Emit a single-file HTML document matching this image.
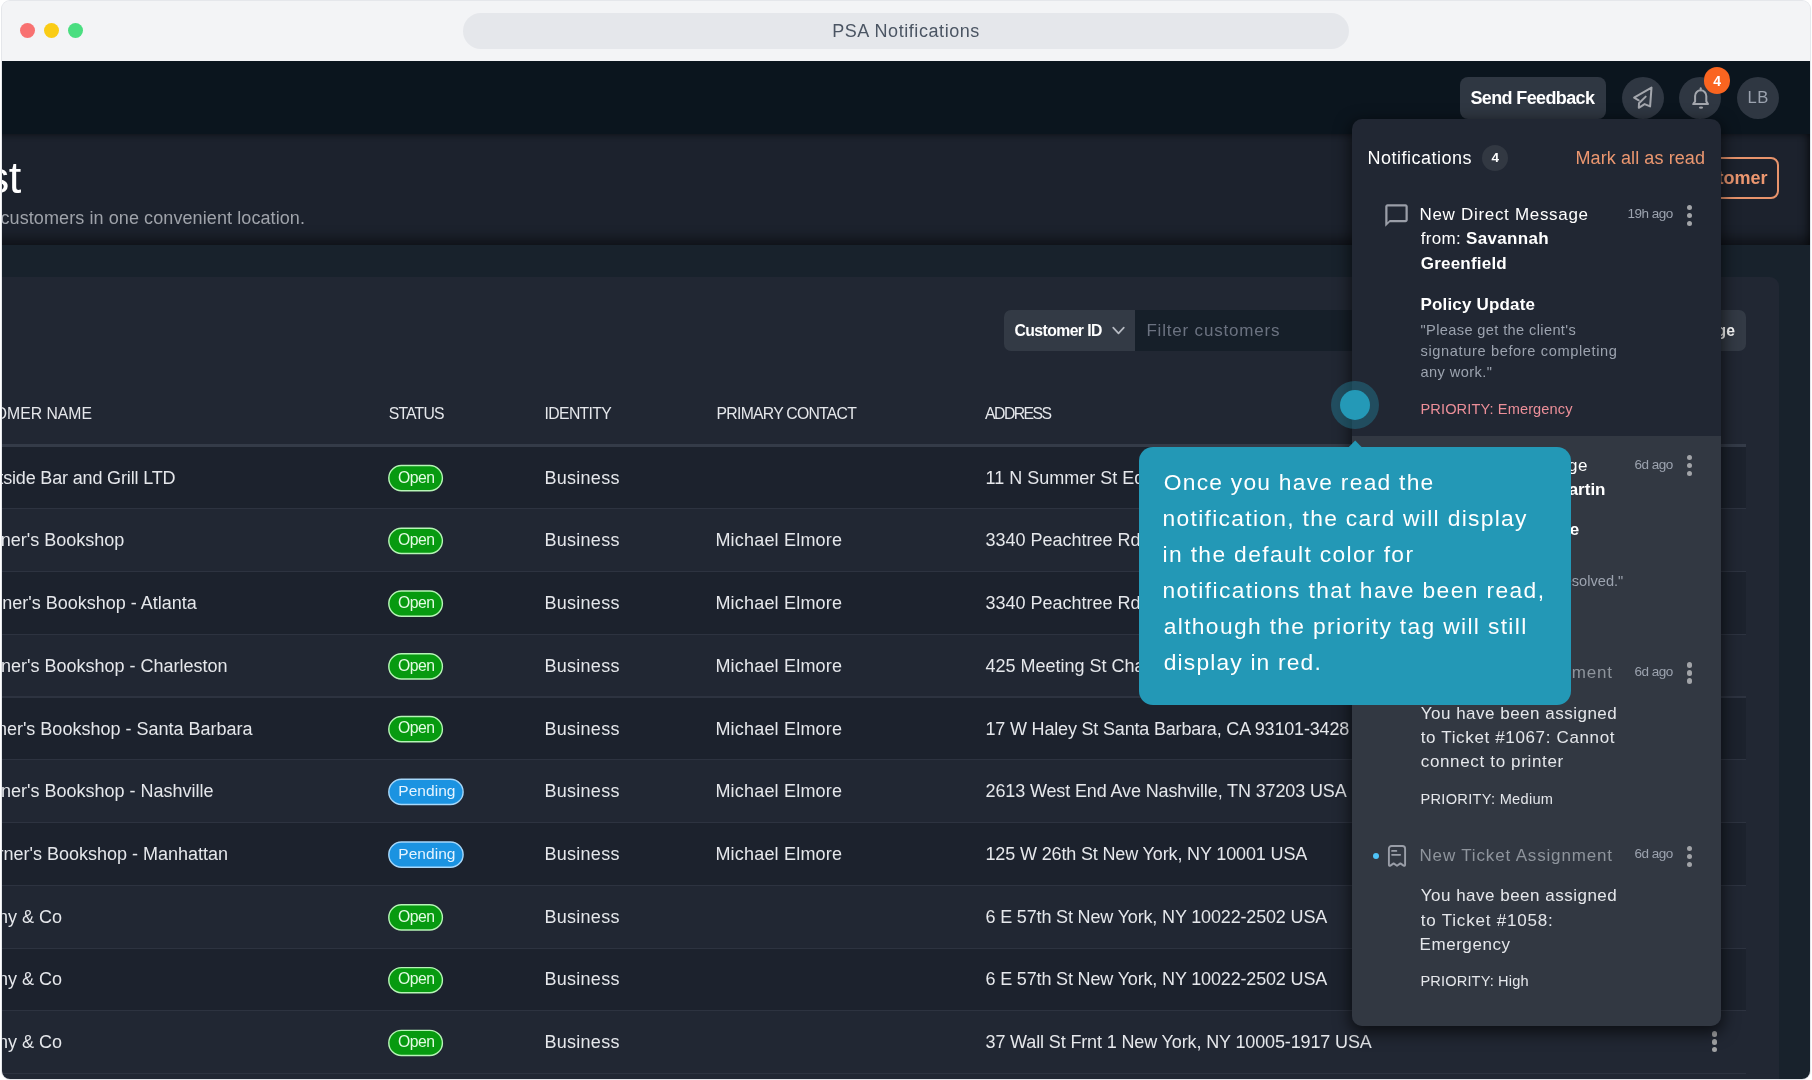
<!DOCTYPE html>
<html lang="en"><head><meta charset="utf-8"><title>PSA Notifications</title>
<style>
html,body{margin:0;padding:0;background:#ffffff}
body{width:1812px;height:1080px;overflow:hidden;position:relative;font-family:"Liberation Sans", sans-serif}
#frame{position:absolute;left:1px;top:0;width:1810px;height:1079.5px;border-radius:9px;background:#e5e7eb}
#win{position:absolute;left:2px;top:1px;width:1808px;height:1077.6px;border-radius:8px;overflow:hidden;background:#f3f4f6}
#c{position:absolute;left:-2px;top:-1px;width:1812px;height:1080px}
#c{will-change:transform}
.b{position:absolute;display:block}
.t{position:absolute;white-space:nowrap;line-height:1;display:block}
b{font-weight:700}
</style></head><body>
<div id="frame"></div>
<div id="win"><div id="c">
<div class="b" style="left:0.00px;top:0.00px;width:1812.00px;height:61.00px;background:#f3f4f6;"></div>
<div class="b" style="left:20.00px;top:23.00px;width:15.00px;height:15.00px;background:#f87171;border-radius:50%;"></div>
<div class="b" style="left:44.00px;top:23.00px;width:15.00px;height:15.00px;background:#facc15;border-radius:50%;"></div>
<div class="b" style="left:68.00px;top:23.00px;width:15.00px;height:15.00px;background:#4ade80;border-radius:50%;"></div>
<div class="b" style="left:463.00px;top:13.00px;width:886.00px;height:36.00px;background:#e5e7eb;border-radius:18px;"></div>
<span class="t" id="t1" style="top:22.00px;font-size:18px;color:#4b5563;left:832.20px;letter-spacing:0.570px;">PSA Notifications</span>
<div class="b" style="left:0.00px;top:61.00px;width:1812.00px;height:73.00px;background:#0b151e;"></div>
<div class="b" style="left:1459.50px;top:77.00px;width:146.50px;height:41.50px;background:#2f3742;border-radius:8px;"></div>
<span class="t" id="t2" style="top:88.50px;font-size:18px;color:#ffffff;font-weight:700;left:1470.40px;letter-spacing:-0.621px;">Send Feedback</span>
<div class="b" style="left:1621.70px;top:76.70px;width:42.00px;height:42.00px;background:#2f3742;border-radius:50%;"></div>
<div class="b" style="left:1678.90px;top:76.70px;width:42.00px;height:42.00px;background:#2f3742;border-radius:50%;"></div>
<div class="b" style="left:1736.80px;top:76.70px;width:42.00px;height:42.00px;background:#2f3742;border-radius:50%;"></div>
<span class="t" id="t3" style="top:90.20px;font-size:16.6px;color:#9ca3af;left:1747.60px;letter-spacing:0.303px;">LB</span>
<svg class="b" style="left:1631.8px;top:85.8px" width="22" height="24" viewBox="0 0 22 24" fill="none" stroke="#a4a7ad" stroke-width="2" stroke-linejoin="round" stroke-linecap="round"><path d="M6.7 14.3 L2.1 11.7 L19.5 1.6 L18.1 20.4 L12.6 18.1 L6.8 21.8 L7 17.3 L13.7 10.6"/></svg>
<svg class="b" style="left:1689.9px;top:85.8px" width="22" height="24" viewBox="0 0 22 24" fill="none" stroke="#a4a7ad" stroke-width="2" stroke-linejoin="round" stroke-linecap="round"><path d="M3.2 18.1 H18 L16.3 15.4 V9.9 A5.6 5.6 0 0 0 5.1 9.9 V15.4 Z"/><path d="M10.7 4.3 V2.2"/><ellipse cx="11" cy="21.6" rx="2.1" ry="1.2" fill="#a4a7ad" stroke="none"/></svg>
<div class="b" style="left:1703.90px;top:67.40px;width:26.60px;height:26.60px;background:#fa6520;border-radius:50%;"></div>
<span class="t" id="t4" style="top:73.60px;font-size:14px;color:#ffffff;font-weight:700;left:1713.30px;">4</span>
<div class="b" style="left:-40.00px;top:134.00px;width:1851.00px;height:111.00px;background:#1c222d;box-shadow:inset 0 -16px 12px -9px rgba(0,0,0,.42),inset 0 5px 6px -4px rgba(0,0,0,.4),inset -9px 0 9px -5px rgba(0,0,0,.5);"></div>
<span class="t" id="t5" style="top:155.00px;font-size:45px;color:#ffffff;right:1790.80px;letter-spacing:-0.600px;margin-right:0.600px;">Customer List</span>
<span class="t" id="t6" style="top:209.30px;font-size:18px;color:#9fa3aa;right:1507.00px;letter-spacing:0.092px;margin-right:-0.092px;">Manage all of your customers in one convenient location.</span>
<div class="b" style="left:1640px;top:157px;width:139px;height:42px;box-sizing:border-box;border:2px solid #e8946c;border-radius:8px"></div>
<span class="t" id="t7" style="top:168.75px;font-size:18px;color:#ec9770;font-weight:700;right:44.50px;">Add Customer</span>
<div class="b" style="left:0.00px;top:245.00px;width:1812.00px;height:840.00px;background:#18222c;"></div>
<div class="b" style="left:-50.00px;top:276.50px;width:1829.00px;height:900.00px;background:#212733;border-radius:9px;"></div>
<div class="b" style="left:1004.30px;top:309.50px;width:130.40px;height:41.30px;background:#333a45;border-radius:7px 0 0 7px;"></div>
<div class="b" style="left:1134.70px;top:309.50px;width:560.00px;height:41.30px;background:#161f29;border-radius:0 7px 7px 0;"></div>
<span class="t" id="t8" style="top:322.62px;font-size:15.75px;color:#ffffff;font-weight:700;left:1014.40px;letter-spacing:-0.564px;">Customer ID</span>
<svg class="b" style="left:1111.3px;top:325.3px" width="15" height="12" viewBox="0 0 15 12" fill="none" stroke="#b6bac2" stroke-width="1.7" stroke-linecap="round" stroke-linejoin="round"><path d="M2.2 2.6 L7.5 8.4 L12.8 2.6"/></svg>
<span class="t" id="t9" style="top:322.00px;font-size:17px;color:#6b7280;left:1146.40px;letter-spacing:0.819px;">Filter customers</span>
<div class="b" style="left:1660.00px;top:310.00px;width:85.50px;height:41.00px;background:#333a45;border-radius:7px;"></div>
<span class="t" id="t10" style="top:322.62px;font-size:15.75px;color:#ffffff;font-weight:700;right:77.00px;">Manage</span>
<span class="t" id="t11" style="top:405.93px;font-size:15.75px;color:#e5e7eb;right:1720.00px;">CUSTOMER NAME</span>
<span class="t" id="t12" style="top:405.93px;font-size:15.75px;color:#e5e7eb;left:388.75px;letter-spacing:-0.809px;">STATUS</span>
<span class="t" id="t13" style="top:405.93px;font-size:15.75px;color:#e5e7eb;left:544.60px;letter-spacing:-0.652px;">IDENTITY</span>
<span class="t" id="t14" style="top:405.93px;font-size:15.75px;color:#e5e7eb;left:716.60px;letter-spacing:-0.731px;">PRIMARY CONTACT</span>
<span class="t" id="t15" style="top:405.93px;font-size:15.75px;color:#e5e7eb;left:985.10px;letter-spacing:-1.526px;">ADDRESS</span>
<div class="b" style="left:-50.00px;top:444.20px;width:1795.50px;height:2.80px;background:#343b48;"></div>
<div class="b" style="left:-50.00px;top:446.60px;width:1795.50px;height:62.76px;background:#1c222d;"></div>
<div class="b" style="left:-50.00px;top:508.21px;width:1795.50px;height:1.15px;background:#2d3340;"></div>
<span class="t" id="t16" style="top:468.75px;font-size:18px;color:#e5e7eb;right:1636.50px;letter-spacing:-0.160px;margin-right:0.160px;">Westside Bar and Grill LTD</span>
<svg class="b" style="left:386px;top:462px" width="61" height="32"><rect x="2.8" y="3.50" width="53.6" height="25.2" rx="12.6" fill="#079a10" stroke="#b6f5b6" stroke-width="1.4"/></svg>
<span class="t" id="t17" style="top:469.68px;font-size:15.75px;color:#e3fbe3;left:397.90px;letter-spacing:-0.510px;">Open</span>
<span class="t" id="t18" style="top:468.75px;font-size:18px;color:#e5e7eb;left:544.60px;letter-spacing:0.250px;">Business</span>
<span class="t" id="t19" style="top:468.75px;font-size:18px;color:#e5e7eb;left:985.50px;">11 N Summer St Edgartown, MA 02539 USA</span>
<div class="b" style="left:1711.55px;top:466.60px;width:5.40px;height:5.40px;background:#a2a3a5;border-radius:50%;"></div>
<div class="b" style="left:1711.55px;top:474.40px;width:5.40px;height:5.40px;background:#a2a3a5;border-radius:50%;"></div>
<div class="b" style="left:1711.55px;top:482.20px;width:5.40px;height:5.40px;background:#a2a3a5;border-radius:50%;"></div>
<div class="b" style="left:-50.00px;top:509.36px;width:1795.50px;height:62.76px;background:#212733;"></div>
<div class="b" style="left:-50.00px;top:570.97px;width:1795.50px;height:1.15px;background:#2d3340;"></div>
<span class="t" id="t20" style="top:531.45px;font-size:18px;color:#e5e7eb;right:1687.75px;">Turner's Bookshop</span>
<svg class="b" style="left:386px;top:524px" width="61" height="32"><rect x="2.8" y="4.26" width="53.6" height="25.2" rx="12.6" fill="#079a10" stroke="#b6f5b6" stroke-width="1.4"/></svg>
<span class="t" id="t21" style="top:532.38px;font-size:15.75px;color:#e3fbe3;left:397.90px;letter-spacing:-0.510px;">Open</span>
<span class="t" id="t22" style="top:531.45px;font-size:18px;color:#e5e7eb;left:544.60px;letter-spacing:0.250px;">Business</span>
<span class="t" id="t23" style="top:531.45px;font-size:18px;color:#e5e7eb;left:715.40px;letter-spacing:0.196px;">Michael Elmore</span>
<span class="t" id="t24" style="top:531.45px;font-size:18px;color:#e5e7eb;left:985.50px;">3340 Peachtree Rd NE Atlanta, GA 30326 USA</span>
<div class="b" style="left:1711.55px;top:529.36px;width:5.40px;height:5.40px;background:#a2a3a5;border-radius:50%;"></div>
<div class="b" style="left:1711.55px;top:537.16px;width:5.40px;height:5.40px;background:#a2a3a5;border-radius:50%;"></div>
<div class="b" style="left:1711.55px;top:544.96px;width:5.40px;height:5.40px;background:#a2a3a5;border-radius:50%;"></div>
<div class="b" style="left:-50.00px;top:572.12px;width:1795.50px;height:62.76px;background:#1c222d;"></div>
<div class="b" style="left:-50.00px;top:633.73px;width:1795.50px;height:1.15px;background:#2d3340;"></div>
<span class="t" id="t25" style="top:594.15px;font-size:18px;color:#e5e7eb;right:1615.25px;">Turner's Bookshop - Atlanta</span>
<svg class="b" style="left:386px;top:587px" width="61" height="32"><rect x="2.8" y="4.02" width="53.6" height="25.2" rx="12.6" fill="#079a10" stroke="#b6f5b6" stroke-width="1.4"/></svg>
<span class="t" id="t26" style="top:595.07px;font-size:15.75px;color:#e3fbe3;left:397.90px;letter-spacing:-0.510px;">Open</span>
<span class="t" id="t27" style="top:594.15px;font-size:18px;color:#e5e7eb;left:544.60px;letter-spacing:0.250px;">Business</span>
<span class="t" id="t28" style="top:594.15px;font-size:18px;color:#e5e7eb;left:715.40px;letter-spacing:0.196px;">Michael Elmore</span>
<span class="t" id="t29" style="top:594.15px;font-size:18px;color:#e5e7eb;left:985.50px;">3340 Peachtree Rd NE Atlanta, GA 30326 USA</span>
<div class="b" style="left:1711.55px;top:592.12px;width:5.40px;height:5.40px;background:#a2a3a5;border-radius:50%;"></div>
<div class="b" style="left:1711.55px;top:599.92px;width:5.40px;height:5.40px;background:#a2a3a5;border-radius:50%;"></div>
<div class="b" style="left:1711.55px;top:607.72px;width:5.40px;height:5.40px;background:#a2a3a5;border-radius:50%;"></div>
<div class="b" style="left:-50.00px;top:634.88px;width:1795.50px;height:62.76px;background:#212733;"></div>
<div class="b" style="left:-50.00px;top:696.49px;width:1795.50px;height:1.15px;background:#2d3340;"></div>
<span class="t" id="t30" style="top:656.85px;font-size:18px;color:#e5e7eb;right:1584.50px;">Turner's Bookshop - Charleston</span>
<svg class="b" style="left:386px;top:650px" width="61" height="32"><rect x="2.8" y="3.78" width="53.6" height="25.2" rx="12.6" fill="#079a10" stroke="#b6f5b6" stroke-width="1.4"/></svg>
<span class="t" id="t31" style="top:657.77px;font-size:15.75px;color:#e3fbe3;left:397.90px;letter-spacing:-0.510px;">Open</span>
<span class="t" id="t32" style="top:656.85px;font-size:18px;color:#e5e7eb;left:544.60px;letter-spacing:0.250px;">Business</span>
<span class="t" id="t33" style="top:656.85px;font-size:18px;color:#e5e7eb;left:715.40px;letter-spacing:0.196px;">Michael Elmore</span>
<span class="t" id="t34" style="top:656.85px;font-size:18px;color:#e5e7eb;left:985.50px;">425 Meeting St Charleston, SC 29403 USA</span>
<div class="b" style="left:1711.55px;top:654.88px;width:5.40px;height:5.40px;background:#a2a3a5;border-radius:50%;"></div>
<div class="b" style="left:1711.55px;top:662.68px;width:5.40px;height:5.40px;background:#a2a3a5;border-radius:50%;"></div>
<div class="b" style="left:1711.55px;top:670.48px;width:5.40px;height:5.40px;background:#a2a3a5;border-radius:50%;"></div>
<div class="b" style="left:-50.00px;top:697.64px;width:1795.50px;height:62.76px;background:#1c222d;"></div>
<div class="b" style="left:-50.00px;top:759.25px;width:1795.50px;height:1.15px;background:#2d3340;"></div>
<span class="t" id="t35" style="top:719.55px;font-size:18px;color:#e5e7eb;right:1559.50px;">Turner's Bookshop - Santa Barbara</span>
<svg class="b" style="left:386px;top:713px" width="61" height="32"><rect x="2.8" y="3.54" width="53.6" height="25.2" rx="12.6" fill="#079a10" stroke="#b6f5b6" stroke-width="1.4"/></svg>
<span class="t" id="t36" style="top:720.47px;font-size:15.75px;color:#e3fbe3;left:397.90px;letter-spacing:-0.510px;">Open</span>
<span class="t" id="t37" style="top:719.55px;font-size:18px;color:#e5e7eb;left:544.60px;letter-spacing:0.250px;">Business</span>
<span class="t" id="t38" style="top:719.55px;font-size:18px;color:#e5e7eb;left:715.40px;letter-spacing:0.196px;">Michael Elmore</span>
<span class="t" id="t39" style="top:719.55px;font-size:18px;color:#e5e7eb;left:985.50px;letter-spacing:-0.183px;">17 W Haley St Santa Barbara, CA 93101-3428 USA</span>
<div class="b" style="left:1711.55px;top:717.64px;width:5.40px;height:5.40px;background:#a2a3a5;border-radius:50%;"></div>
<div class="b" style="left:1711.55px;top:725.44px;width:5.40px;height:5.40px;background:#a2a3a5;border-radius:50%;"></div>
<div class="b" style="left:1711.55px;top:733.24px;width:5.40px;height:5.40px;background:#a2a3a5;border-radius:50%;"></div>
<div class="b" style="left:-50.00px;top:760.40px;width:1795.50px;height:62.76px;background:#212733;"></div>
<div class="b" style="left:-50.00px;top:822.01px;width:1795.50px;height:1.15px;background:#2d3340;"></div>
<span class="t" id="t40" style="top:782.25px;font-size:18px;color:#e5e7eb;right:1598.50px;">Turner's Bookshop - Nashville</span>
<svg class="b" style="left:386px;top:775px" width="81" height="32"><rect x="2.8" y="4.30" width="74.3" height="25.2" rx="12.6" fill="#1b93e1" stroke="#a6d8fb" stroke-width="1.4"/></svg>
<span class="t" id="t41" style="top:783.30px;font-size:15.5px;color:#e6f4ff;left:398.30px;letter-spacing:0.052px;">Pending</span>
<span class="t" id="t42" style="top:782.25px;font-size:18px;color:#e5e7eb;left:544.60px;letter-spacing:0.250px;">Business</span>
<span class="t" id="t43" style="top:782.25px;font-size:18px;color:#e5e7eb;left:715.40px;letter-spacing:0.196px;">Michael Elmore</span>
<span class="t" id="t44" style="top:782.25px;font-size:18px;color:#e5e7eb;left:985.50px;letter-spacing:-0.124px;">2613 West End Ave Nashville, TN 37203 USA</span>
<div class="b" style="left:1711.55px;top:780.40px;width:5.40px;height:5.40px;background:#a2a3a5;border-radius:50%;"></div>
<div class="b" style="left:1711.55px;top:788.20px;width:5.40px;height:5.40px;background:#a2a3a5;border-radius:50%;"></div>
<div class="b" style="left:1711.55px;top:796.00px;width:5.40px;height:5.40px;background:#a2a3a5;border-radius:50%;"></div>
<div class="b" style="left:-50.00px;top:823.16px;width:1795.50px;height:62.76px;background:#1c222d;"></div>
<div class="b" style="left:-50.00px;top:884.77px;width:1795.50px;height:1.15px;background:#2d3340;"></div>
<span class="t" id="t45" style="top:844.95px;font-size:18px;color:#e5e7eb;right:1584.00px;">Turner's Bookshop - Manhattan</span>
<svg class="b" style="left:386px;top:838px" width="81" height="32"><rect x="2.8" y="4.06" width="74.3" height="25.2" rx="12.6" fill="#1b93e1" stroke="#a6d8fb" stroke-width="1.4"/></svg>
<span class="t" id="t46" style="top:846.00px;font-size:15.5px;color:#e6f4ff;left:398.30px;letter-spacing:0.052px;">Pending</span>
<span class="t" id="t47" style="top:844.95px;font-size:18px;color:#e5e7eb;left:544.60px;letter-spacing:0.250px;">Business</span>
<span class="t" id="t48" style="top:844.95px;font-size:18px;color:#e5e7eb;left:715.40px;letter-spacing:0.196px;">Michael Elmore</span>
<span class="t" id="t49" style="top:844.95px;font-size:18px;color:#e5e7eb;left:985.50px;letter-spacing:-0.146px;">125 W 26th St New York, NY 10001 USA</span>
<div class="b" style="left:1711.55px;top:843.16px;width:5.40px;height:5.40px;background:#a2a3a5;border-radius:50%;"></div>
<div class="b" style="left:1711.55px;top:850.96px;width:5.40px;height:5.40px;background:#a2a3a5;border-radius:50%;"></div>
<div class="b" style="left:1711.55px;top:858.76px;width:5.40px;height:5.40px;background:#a2a3a5;border-radius:50%;"></div>
<div class="b" style="left:-50.00px;top:885.92px;width:1795.50px;height:62.76px;background:#212733;"></div>
<div class="b" style="left:-50.00px;top:947.53px;width:1795.50px;height:1.15px;background:#2d3340;"></div>
<span class="t" id="t50" style="top:907.65px;font-size:18px;color:#e5e7eb;right:1750.00px;">Tiffany &amp; Co</span>
<svg class="b" style="left:386px;top:901px" width="61" height="32"><rect x="2.8" y="3.82" width="53.6" height="25.2" rx="12.6" fill="#079a10" stroke="#b6f5b6" stroke-width="1.4"/></svg>
<span class="t" id="t51" style="top:908.58px;font-size:15.75px;color:#e3fbe3;left:397.90px;letter-spacing:-0.510px;">Open</span>
<span class="t" id="t52" style="top:907.65px;font-size:18px;color:#e5e7eb;left:544.60px;letter-spacing:0.250px;">Business</span>
<span class="t" id="t53" style="top:907.65px;font-size:18px;color:#e5e7eb;left:985.50px;letter-spacing:-0.162px;">6 E 57th St New York, NY 10022-2502 USA</span>
<div class="b" style="left:1711.55px;top:905.92px;width:5.40px;height:5.40px;background:#a2a3a5;border-radius:50%;"></div>
<div class="b" style="left:1711.55px;top:913.72px;width:5.40px;height:5.40px;background:#a2a3a5;border-radius:50%;"></div>
<div class="b" style="left:1711.55px;top:921.52px;width:5.40px;height:5.40px;background:#a2a3a5;border-radius:50%;"></div>
<div class="b" style="left:-50.00px;top:948.68px;width:1795.50px;height:62.76px;background:#1c222d;"></div>
<div class="b" style="left:-50.00px;top:1010.29px;width:1795.50px;height:1.15px;background:#2d3340;"></div>
<span class="t" id="t54" style="top:970.35px;font-size:18px;color:#e5e7eb;right:1750.00px;">Tiffany &amp; Co</span>
<svg class="b" style="left:386px;top:964px" width="61" height="32"><rect x="2.8" y="3.58" width="53.6" height="25.2" rx="12.6" fill="#079a10" stroke="#b6f5b6" stroke-width="1.4"/></svg>
<span class="t" id="t55" style="top:971.27px;font-size:15.75px;color:#e3fbe3;left:397.90px;letter-spacing:-0.510px;">Open</span>
<span class="t" id="t56" style="top:970.35px;font-size:18px;color:#e5e7eb;left:544.60px;letter-spacing:0.250px;">Business</span>
<span class="t" id="t57" style="top:970.35px;font-size:18px;color:#e5e7eb;left:985.50px;letter-spacing:-0.162px;">6 E 57th St New York, NY 10022-2502 USA</span>
<div class="b" style="left:1711.55px;top:968.68px;width:5.40px;height:5.40px;background:#a2a3a5;border-radius:50%;"></div>
<div class="b" style="left:1711.55px;top:976.48px;width:5.40px;height:5.40px;background:#a2a3a5;border-radius:50%;"></div>
<div class="b" style="left:1711.55px;top:984.28px;width:5.40px;height:5.40px;background:#a2a3a5;border-radius:50%;"></div>
<div class="b" style="left:-50.00px;top:1011.44px;width:1795.50px;height:62.76px;background:#212733;"></div>
<div class="b" style="left:-50.00px;top:1073.05px;width:1795.50px;height:1.15px;background:#2d3340;"></div>
<span class="t" id="t58" style="top:1033.05px;font-size:18px;color:#e5e7eb;right:1750.00px;">Tiffany &amp; Co</span>
<svg class="b" style="left:386px;top:1026px" width="61" height="32"><rect x="2.8" y="4.34" width="53.6" height="25.2" rx="12.6" fill="#079a10" stroke="#b6f5b6" stroke-width="1.4"/></svg>
<span class="t" id="t59" style="top:1033.98px;font-size:15.75px;color:#e3fbe3;left:397.90px;letter-spacing:-0.510px;">Open</span>
<span class="t" id="t60" style="top:1033.05px;font-size:18px;color:#e5e7eb;left:544.60px;letter-spacing:0.250px;">Business</span>
<span class="t" id="t61" style="top:1033.05px;font-size:18px;color:#e5e7eb;left:985.50px;letter-spacing:-0.135px;">37 Wall St Frnt 1 New York, NY 10005-1917 USA</span>
<div class="b" style="left:1711.55px;top:1031.44px;width:5.40px;height:5.40px;background:#a2a3a5;border-radius:50%;"></div>
<div class="b" style="left:1711.55px;top:1039.24px;width:5.40px;height:5.40px;background:#a2a3a5;border-radius:50%;"></div>
<div class="b" style="left:1711.55px;top:1047.04px;width:5.40px;height:5.40px;background:#a2a3a5;border-radius:50%;"></div>
<div class="b" style="left:1352px;top:119px;width:369px;height:907.3px;background:#212733;border-radius:10px;box-shadow:0 5px 16px 2px rgba(0,0,0,.62);overflow:hidden"><div class="b" style="left:0;top:316.5px;width:369px;height:600px;background:#323842"></div></div>
<span class="t" id="t62" style="top:148.75px;font-size:18px;color:#ffffff;left:1367.50px;letter-spacing:0.496px;">Notifications</span>
<div class="b" style="left:1482.40px;top:144.80px;width:26.00px;height:26.00px;background:#323842;border-radius:50%;"></div>
<span class="t" id="t63" style="top:150.95px;font-size:13.5px;color:#ffffff;font-weight:700;left:1491.60px;">4</span>
<span class="t" id="t64" style="top:148.75px;font-size:18px;color:#ec9770;left:1575.50px;letter-spacing:0.096px;">Mark all as read</span>
<svg class="b" style="left:1383.45px;top:201.85px" width="27" height="27" viewBox="0 0 24 24" fill="#9a9ea8"><path d="M20 2H4c-1.1 0-2 .9-2 2v18l4-4h14c1.1 0 2-.9 2-2V4c0-1.1-.9-2-2-2zm0 14H6l-2 2V4h16v12z"/></svg>
<span class="t" id="t65" style="top:206.00px;font-size:17px;color:#ffffff;left:1419.50px;letter-spacing:0.687px;">New Direct Message</span>
<span class="t" id="t66" style="top:230.40px;font-size:17px;color:#ffffff;left:1420.75px;letter-spacing:0.312px;">from: <b>Savannah</b></span>
<span class="t" id="t67" style="top:254.60px;font-size:17px;color:#ffffff;font-weight:700;left:1420.75px;letter-spacing:0.212px;">Greenfield</span>
<span class="t" id="t68" style="top:206.75px;font-size:13.5px;color:#9ca3af;left:1627.50px;letter-spacing:-0.510px;">19h ago</span>
<div class="b" style="left:1686.80px;top:204.80px;width:5.40px;height:5.40px;background:#a2a4a8;border-radius:50%;"></div>
<div class="b" style="left:1686.80px;top:212.70px;width:5.40px;height:5.40px;background:#a2a4a8;border-radius:50%;"></div>
<div class="b" style="left:1686.80px;top:220.60px;width:5.40px;height:5.40px;background:#a2a4a8;border-radius:50%;"></div>
<span class="t" id="t69" style="top:295.50px;font-size:17px;color:#ffffff;font-weight:700;left:1420.50px;letter-spacing:0.173px;">Policy Update</span>
<span class="t" id="t70" style="top:323.20px;font-size:14.6px;color:#9ca3af;left:1420.50px;letter-spacing:0.372px;">"Please get the client's</span>
<span class="t" id="t71" style="top:344.10px;font-size:14.6px;color:#9ca3af;left:1420.50px;letter-spacing:0.630px;">signature before completing</span>
<span class="t" id="t72" style="top:364.90px;font-size:14.6px;color:#9ca3af;left:1420.50px;letter-spacing:0.429px;">any work."</span>
<span class="t" id="t73" style="top:401.95px;font-size:14.6px;color:#ec8f99;left:1420.50px;letter-spacing:0.109px;">PRIORITY: Emergency</span>
<svg class="b" style="left:1383.45px;top:452.35px" width="27" height="27" viewBox="0 0 24 24" fill="#9a9ea8"><path d="M20 2H4c-1.1 0-2 .9-2 2v18l4-4h14c1.1 0 2-.9 2-2V4c0-1.1-.9-2-2-2zm0 14H6l-2 2V4h16v12z"/></svg>
<span class="t" id="t74" style="top:456.50px;font-size:17px;color:#ffffff;left:1420.75px;letter-spacing:0.584px;">New Direct Message</span>
<span class="t" id="t75" style="top:481.00px;font-size:17px;color:#ffffff;right:206.50px;">from: <b>Daniel Martin</b></span>
<span class="t" id="t76" style="top:520.50px;font-size:17px;color:#ffffff;font-weight:700;right:232.75px;">Ticket Update</span>
<span class="t" id="t77" style="top:573.95px;font-size:14.6px;color:#9ca3af;right:188.75px;">"The issue has been resolved."</span>
<span class="t" id="t78" style="top:457.50px;font-size:13.5px;color:#9ca3af;left:1634.50px;letter-spacing:-0.509px;">6d ago</span>
<div class="b" style="left:1686.80px;top:454.90px;width:5.40px;height:5.40px;background:#a2a4a8;border-radius:50%;"></div>
<div class="b" style="left:1686.80px;top:462.80px;width:5.40px;height:5.40px;background:#a2a4a8;border-radius:50%;"></div>
<div class="b" style="left:1686.80px;top:470.70px;width:5.40px;height:5.40px;background:#a2a4a8;border-radius:50%;"></div>
<div class="b" style="left:1372.75px;top:670.50px;width:6.20px;height:6.20px;background:#4fc3f7;border-radius:50%;"></div>
<svg class="b" style="left:1387.1px;top:661.0px" width="20" height="25" viewBox="0 0 20 25" fill="none" stroke="#9a9ea8" stroke-width="1.9" stroke-linejoin="round" stroke-linecap="round"><path d="M1.9 20.4 V4.7 a2.7 2.7 0 0 1 2.7 -2.7 h10.8 a2.7 2.7 0 0 1 2.7 2.7 V20.4 Q18.1 22.4 16.6 21.6 L13.4 19.4 L10 21.8 L6.6 19.4 L3.4 21.6 Q1.9 22.4 1.9 20.4 Z"/><path stroke-width="1.7" d="M5 6.9 h4.4 M5 10.8 h8.2"/></svg>
<span class="t" id="t79" style="top:664.00px;font-size:17px;color:#8e949c;left:1420.75px;letter-spacing:0.775px;">New Ticket Assignment</span>
<span class="t" id="t80" style="top:665.00px;font-size:13.5px;color:#9ca3af;left:1634.50px;letter-spacing:-0.509px;">6d ago</span>
<div class="b" style="left:1686.80px;top:662.40px;width:5.40px;height:5.40px;background:#a2a4a8;border-radius:50%;"></div>
<div class="b" style="left:1686.80px;top:670.30px;width:5.40px;height:5.40px;background:#a2a4a8;border-radius:50%;"></div>
<div class="b" style="left:1686.80px;top:678.20px;width:5.40px;height:5.40px;background:#a2a4a8;border-radius:50%;"></div>
<span class="t" id="t81" style="top:705.25px;font-size:17px;color:#e5e7eb;left:1420.75px;letter-spacing:0.496px;">You have been assigned</span>
<span class="t" id="t82" style="top:729.20px;font-size:17px;color:#e5e7eb;left:1420.75px;letter-spacing:0.645px;">to Ticket #1067: Cannot</span>
<span class="t" id="t83" style="top:753.20px;font-size:17px;color:#e5e7eb;left:1420.75px;letter-spacing:0.655px;">connect to printer</span>
<span class="t" id="t84" style="top:792.20px;font-size:14.6px;color:#e5e7eb;left:1420.50px;letter-spacing:0.291px;">PRIORITY: Medium</span>
<div class="b" style="left:1372.65px;top:853.10px;width:6.20px;height:6.20px;background:#4fc3f7;border-radius:50%;"></div>
<svg class="b" style="left:1387.1px;top:844.1px" width="20" height="25" viewBox="0 0 20 25" fill="none" stroke="#9a9ea8" stroke-width="1.9" stroke-linejoin="round" stroke-linecap="round"><path d="M1.9 20.4 V4.7 a2.7 2.7 0 0 1 2.7 -2.7 h10.8 a2.7 2.7 0 0 1 2.7 2.7 V20.4 Q18.1 22.4 16.6 21.6 L13.4 19.4 L10 21.8 L6.6 19.4 L3.4 21.6 Q1.9 22.4 1.9 20.4 Z"/><path stroke-width="1.7" d="M5 6.9 h4.4 M5 10.8 h8.2"/></svg>
<span class="t" id="t85" style="top:846.50px;font-size:17px;color:#8e949c;left:1419.50px;letter-spacing:0.838px;">New Ticket Assignment</span>
<span class="t" id="t86" style="top:847.00px;font-size:13.5px;color:#9ca3af;left:1634.50px;letter-spacing:-0.509px;">6d ago</span>
<div class="b" style="left:1686.80px;top:846.00px;width:5.40px;height:5.40px;background:#a2a4a8;border-radius:50%;"></div>
<div class="b" style="left:1686.80px;top:853.90px;width:5.40px;height:5.40px;background:#a2a4a8;border-radius:50%;"></div>
<div class="b" style="left:1686.80px;top:861.80px;width:5.40px;height:5.40px;background:#a2a4a8;border-radius:50%;"></div>
<span class="t" id="t87" style="top:886.75px;font-size:17px;color:#e5e7eb;left:1420.75px;letter-spacing:0.496px;">You have been assigned</span>
<span class="t" id="t88" style="top:911.50px;font-size:17px;color:#e5e7eb;left:1420.75px;letter-spacing:0.798px;">to Ticket #1058:</span>
<span class="t" id="t89" style="top:936.00px;font-size:17px;color:#e5e7eb;left:1419.50px;letter-spacing:0.564px;">Emergency</span>
<span class="t" id="t90" style="top:974.45px;font-size:14.6px;color:#e5e7eb;left:1420.50px;letter-spacing:0.135px;">PRIORITY: High</span>
<div class="b" style="left:1330.80px;top:380.60px;width:48.40px;height:48.40px;background:rgba(36,153,183,.34);border-radius:50%;"></div>
<div class="b" style="left:1339.80px;top:389.60px;width:30.40px;height:30.40px;background:#2499b7;border-radius:50%;"></div>
<svg class="b" style="left:1347px;top:439.5px" width="16" height="9" viewBox="0 0 16 9"><path d="M0.4 8.5 L8.2 0.5 L16 8.5 Z" fill="#2398b6"/></svg>
<div class="b" style="left:1139.00px;top:447.00px;width:431.50px;height:257.80px;background:#2398b6;border-radius:14px;"></div>
<span class="t" id="t91" style="top:471.35px;font-size:22.8px;color:#ffffff;left:1163.75px;letter-spacing:1.246px;">Once you have read the</span>
<span class="t" id="t92" style="top:507.35px;font-size:22.8px;color:#ffffff;left:1162.50px;letter-spacing:1.314px;">notification, the card will display</span>
<span class="t" id="t93" style="top:543.10px;font-size:22.8px;color:#ffffff;left:1162.50px;letter-spacing:1.359px;">in the default color for</span>
<span class="t" id="t94" style="top:579.20px;font-size:22.8px;color:#ffffff;left:1162.50px;letter-spacing:1.383px;">notifications that have been read,</span>
<span class="t" id="t95" style="top:615.10px;font-size:22.8px;color:#ffffff;left:1163.75px;letter-spacing:1.342px;">although the priority tag will still</span>
<span class="t" id="t96" style="top:651.10px;font-size:22.8px;color:#ffffff;left:1163.75px;letter-spacing:1.167px;">display in red.</span>
</div></div>
</body></html>
